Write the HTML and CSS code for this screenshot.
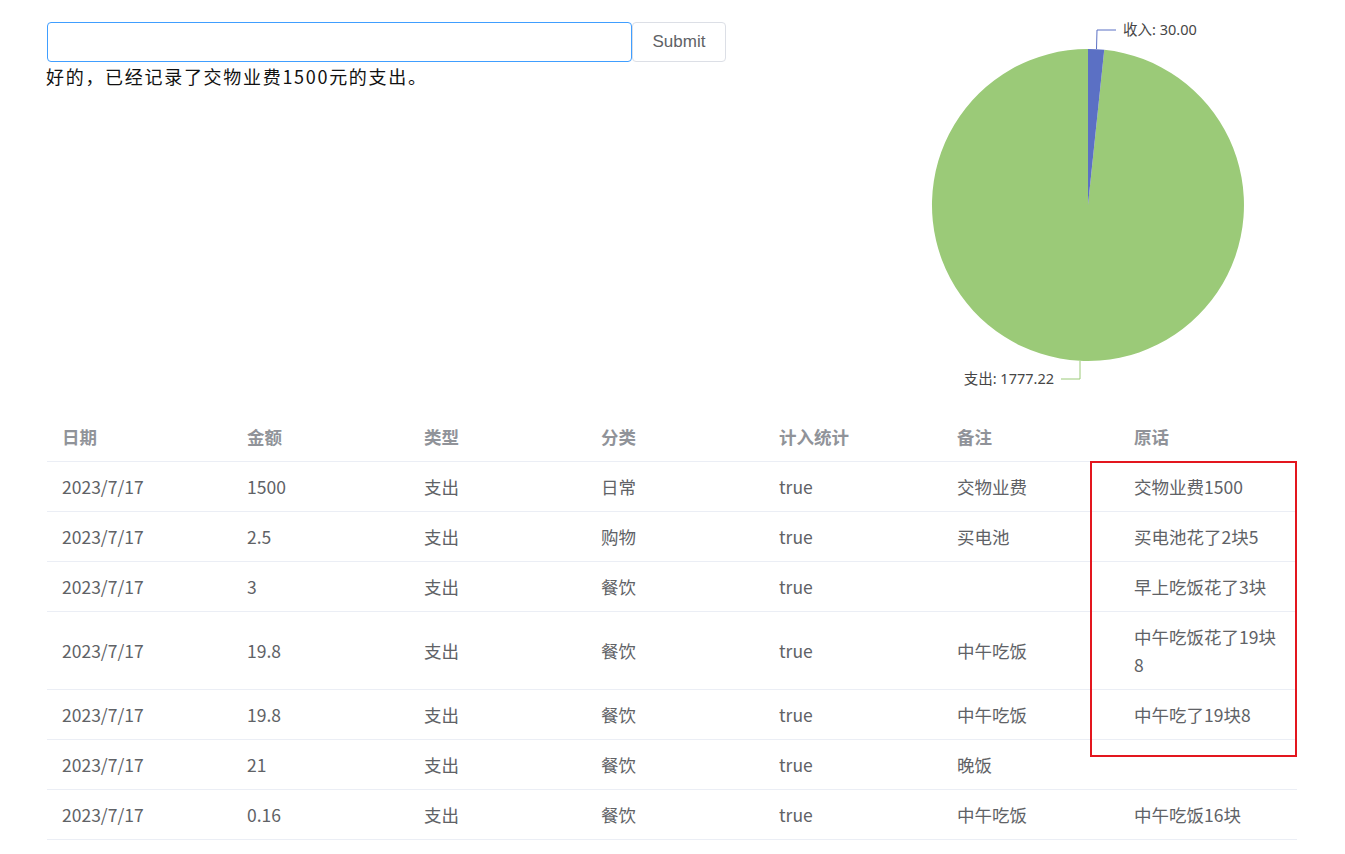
FILE: index.html
```html
<!DOCTYPE html>
<html lang="zh-CN">
<head>
<meta charset="utf-8">
<title>记账</title>
<link rel="stylesheet" href="styles.css">
</head>
<body>
<div class="page">
  <section class="top">
    <div class="form-col">
      <form class="ask">
        <input class="ask-input" type="text">
        <button class="ask-btn" type="button">Submit</button>
      </form>
      <p class="reply">好的，已经记录了交物业费1500元的支出。</p>
    </div>
    <svg class="chart" width="420" height="412" viewBox="0 0 420 412">
      <path d="M211,205 L227.24,49.85 A156,156 0 1 1 211,49 Z" fill="#9bca78"/>
      <path d="M211,205 L211,49 A156,156 0 0 1 227.24,49.85 Z" fill="#5b70c4"/>
      <polyline points="219.5,49 220,30 239,30" fill="none" stroke="#5b70c4" stroke-width="1"/>
      <text x="246" y="29" class="lbl" dominant-baseline="central">收入: 30.00</text>
      <polyline points="203,361 203,379 184,379" fill="none" stroke="#9bca78" stroke-width="1"/>
      <text x="177" y="378" class="lbl" text-anchor="end" dominant-baseline="central">支出: 1777.22</text>
    </svg>
  </section>
  <section class="table-wrap">
    <table class="data">
      <colgroup>
        <col class="c1"><col class="c2"><col class="c3"><col class="c4"><col class="c5"><col class="c6"><col class="c7">
      </colgroup>
      <thead>
        <tr><th>日期</th><th>金额</th><th>类型</th><th>分类</th><th>计入统计</th><th>备注</th><th>原话</th></tr>
      </thead>
      <tbody>
        <tr><td>2023/7/17</td><td>1500</td><td>支出</td><td>日常</td><td>true</td><td>交物业费</td><td>交物业费1500</td></tr>
        <tr><td>2023/7/17</td><td>2.5</td><td>支出</td><td>购物</td><td>true</td><td>买电池</td><td>买电池花了2块5</td></tr>
        <tr><td>2023/7/17</td><td>3</td><td>支出</td><td>餐饮</td><td>true</td><td></td><td>早上吃饭花了3块</td></tr>
        <tr><td>2023/7/17</td><td>19.8</td><td>支出</td><td>餐饮</td><td>true</td><td>中午吃饭</td><td>中午吃饭花了19块8</td></tr>
        <tr><td>2023/7/17</td><td>19.8</td><td>支出</td><td>餐饮</td><td>true</td><td>中午吃饭</td><td>中午吃了19块8</td></tr>
        <tr><td>2023/7/17</td><td>21</td><td>支出</td><td>餐饮</td><td>true</td><td>晚饭</td><td></td></tr>
        <tr><td>2023/7/17</td><td>0.16</td><td>支出</td><td>餐饮</td><td>true</td><td>中午吃饭</td><td>中午吃饭16块</td></tr>
      </tbody>
    </table>
    <div class="highlight"></div>
  </section>
</div>
</body>
</html>
```
FILE: styles.css
```css
html, body {
  margin: 0;
  padding: 0;
  background: #ffffff;
}
body {
  font-family: "Noto Sans CJK SC", "Noto Sans", sans-serif;
  color: #303133;
}
.page {
  padding: 0 48px 0 47px;
}
.top {
  display: flex;
  justify-content: space-between;
  height: 412px;
}
.form-col {
  padding-top: 22px;
}
.ask {
  display: flex;
  margin: 0;
}
.ask-input {
  box-sizing: border-box;
  width: 585px;
  height: 40px;
  border: 1px solid #409eff;
  border-radius: 4px;
  outline: none;
  padding: 0 12px;
  margin: 0;
  font-size: 16px;
}
.ask-btn {
  box-sizing: border-box;
  width: 94px;
  height: 40px;
  margin: 0;
  border: 1px solid #dcdfe6;
  border-radius: 4px;
  background: #fff;
  color: #606266;
  font-family: "Liberation Sans", Arial, sans-serif;
  font-size: 17px;
  padding: 0;
}
.reply {
  margin: 0 0 0 -1px;
  font-size: 18px;
  line-height: 28px;
  color: #111;
  letter-spacing: 1.7px;
}
.chart {
  display: block;
}
.lbl {
  font-family: "Noto Sans", "Noto Sans CJK SC", sans-serif;
  font-size: 14.5px;
  fill: #464646;
}
.table-wrap {
  position: relative;
}
.data {
  width: 1250px;
  table-layout: fixed;
  border-collapse: collapse;
  font-size: 17.5px;
}
.c1 { width: 185px; }
.c2 { width: 177px; }
.c3 { width: 177px; }
.c4 { width: 178px; }
.c5 { width: 178px; }
.c6 { width: 177px; }
.c7 { width: 178px; }
.data th, .data td {
  text-align: left;
  padding: 11px 15px 10px;
  line-height: 28px;
  border-bottom: 1px solid #ebeef5;
  vertical-align: middle;
  word-break: break-all;
}
.data th {
  color: #909399;
  font-weight: bold;
}
.data td {
  color: #606266;
}
.highlight {
  position: absolute;
  left: 1043px;
  top: 49px;
  width: 207px;
  height: 296px;
  box-sizing: border-box;
  border: 2px solid #e3161e;
  pointer-events: none;
}
```
